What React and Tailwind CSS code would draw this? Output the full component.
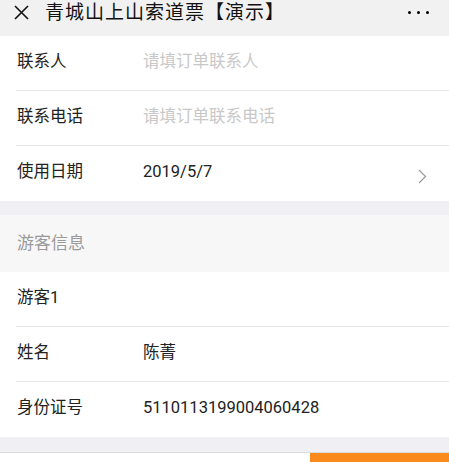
const font = { fontFamily: 'Roboto, "Noto Sans CJK SC", "Noto Sans", sans-serif' };

const Row = ({ label, value, placeholder, arrow, divider = true }) => (
    <div className="pl-4 bg-white">
        <div className={`h-[55px] flex items-center pr-4 pb-[2px] ${divider ? "border-b border-[#e5e5e5]" : ""}`}>
            <div className="w-[127px] pl-[1px] text-[16.5px] text-[#222]">{label}</div>
            <div className={`flex-1 text-[16.5px] ${value ? "text-[#222]" : "text-[#c8c8c8]"}`}>
                {value || placeholder}
            </div>
            {arrow && (
                <svg width="9" height="15" viewBox="0 0 9 15" className="mr-[6px] mt-[8px]">
                    <path d="M1 1l6.5 6.5L1 14" fill="none" stroke="#9a9a9a" strokeWidth="1.2" />
                </svg>
            )}
        </div>
    </div>
);

const App = () => {
    return (
        <div className="w-[449px] h-[462px] overflow-hidden bg-[#efeff4] leading-none" style={font}>
            {/* 顶部导航 */}
            <div className="h-[36px] bg-[#f1f1f1] flex items-center px-[14px] pb-[11px]">
                <svg width="15" height="15" viewBox="0 0 15 15" className="mr-[16px]">
                    <path d="M1 1l13 13M14 1L1 14" stroke="#111" strokeWidth="1.6" />
                </svg>
                <div className="flex-1 text-[19px] text-[#111] tracking-[1px]">青城山上山索道票【演示】</div>
                <div className="flex gap-[6px] mr-[6px]">
                    <span className="w-[3px] h-[3px] rounded-full bg-black" />
                    <span className="w-[3px] h-[3px] rounded-full bg-black" />
                    <span className="w-[3px] h-[3px] rounded-full bg-black" />
                </div>
            </div>

            <Row label="联系人" placeholder="请填订单联系人" />
            <Row label="联系电话" placeholder="请填订单联系电话" />
            <Row label="使用日期" value="2019/5/7" arrow divider={false} />

            <div className="h-[14px]" />

            <div className="h-[57px] bg-[#f7f7f7] flex items-center pl-[17px] text-[17px] text-[#9a9a9a]">
                游客信息
            </div>

            <Row label="游客1" />
            <Row label="姓名" value="陈菁" />
            <Row label="身份证号" value="5110113199004060428" divider={false} />

            <div className="h-[15px]" />

            <div className="h-[10px] bg-white border-t border-[#dcdcdc] flex justify-end">
                <div className="w-[139px] bg-[#fb8a1c]" />
            </div>
        </div>
    );
};

export default App;
